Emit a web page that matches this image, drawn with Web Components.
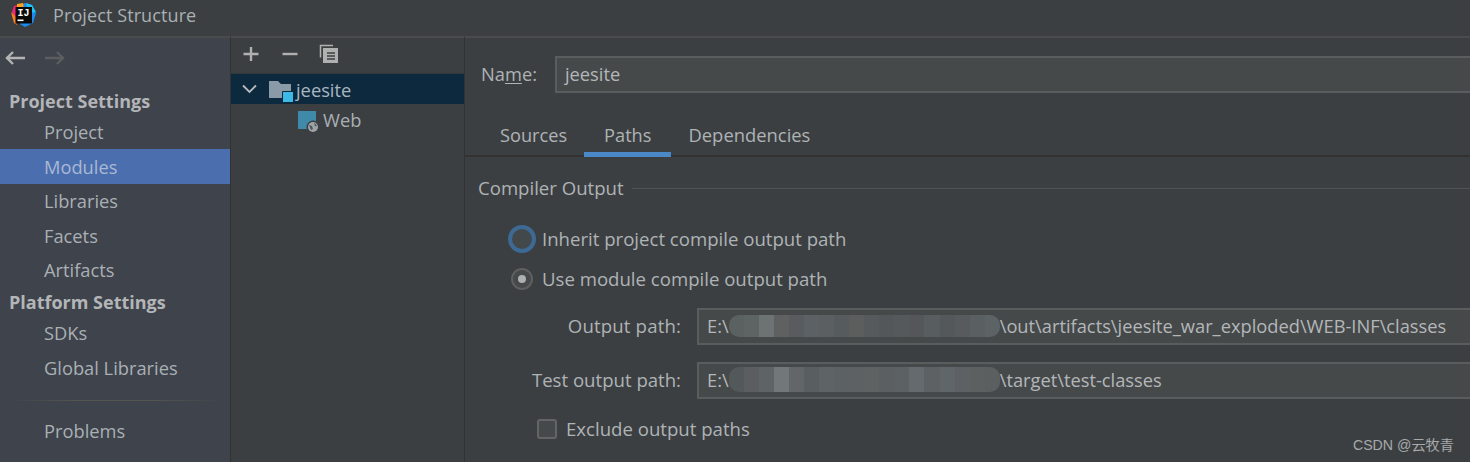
<!DOCTYPE html>
<html><head><meta charset="utf-8">
<style>
html,body{margin:0;padding:0;background:#3c3f41;overflow:hidden}
body{width:1470px;height:462px;font-family:"Open Sans","Noto Sans",sans-serif;color:#bbbbbb;font-size:18px}
ps-app{display:block;width:1470px;height:462px}
</style></head><body>
<ps-app></ps-app>
<template id="t-app">
<style>
:host{display:flex;flex-direction:column;position:relative;overflow:hidden}
.main{display:flex;flex:1;min-height:0}
</style>
<ps-title></ps-title>
<div class="main"><ps-side></ps-side><ps-tree></ps-tree><ps-form></ps-form></div>
<ps-mark></ps-mark>
</template>
<template id="t-title">
<style>
:host{display:flex;align-items:center;height:36px;box-sizing:border-box;background:#3c3f41;flex:none;padding:0 0 6px 11px;gap:17px}
.t{font-size:18px;color:#a9b0b5;line-height:30px;letter-spacing:.1px}
svg{display:block;flex:none}
</style>
<svg width="25" height="25" viewBox="0 0 25 25"><path d="M3 3 11 1l3 4-4 12-6 0-3-8z" fill="#f5296f"/><path d="M0 9 5 14 6 22 3 20z" fill="#fc801d"/><path d="M6 1l6-1 2 4H6z" fill="#fca01d"/><path d="M13 0l8 2 4 8-3 10-8 4-5-3z" fill="#1a8bf5"/><path d="M15 0l6 2 4 7-7 1z" fill="#1ec5f0"/><rect x="4.500" y="4" width="16.500" height="16.500" fill="#0a0a0a"/><text x="6.500" y="13" font-family="Liberation Mono,monospace" font-weight="700" font-size="10" fill="#fff" textLength="12">IJ</text><rect x="6.500" y="16.500" width="6" height="1.600" fill="#fff"/></svg>
<span class="t">Project Structure</span>
</template>
<template id="t-side">
<style>
:host{display:block;width:230px;flex:none;background:#3e434c;border-top:2px solid #4a4b4c;box-sizing:content-box;height:424px}
.nav{display:flex;gap:20px;height:40px;align-items:center;padding:0 0 0 5px;box-sizing:border-box}
.nav svg{display:block}
.h{font-weight:700;font-size:18px;line-height:30px;padding-left:9px;color:#b3b5b7}
.h.first{margin-top:8px}
.i{height:34.5px;line-height:34.5px;padding-left:44px;font-size:18.300px;color:#aab0b4}
.i.sel{background:#4b6eaf;color:#a8b9d4}
.d{height:1px;margin:14px 5px 14.500px;background:linear-gradient(90deg,#3e434c,#53544f 30%,#53544f 70%,#3e434c)}
</style>
<div class="nav">
<svg width="20" height="18" viewBox="0 0 20 18"><path d="M1 9h19M8 3 2 9l6 6" fill="none" stroke="#b4b4b4" stroke-width="2.400"/></svg>
<svg width="20" height="18" viewBox="0 0 20 18"><path d="M0 9h19M12 3l6 6-6 6" fill="none" stroke="#5b5d5e" stroke-width="2.400"/></svg>
</div>
<div class="h first">Project Settings</div>
<div class="i" style="height:33px;line-height:32px">Project</div>
<div class="i sel" style="line-height:36px">Modules</div>
<div class="i">Libraries</div>
<div class="i" style="line-height:36px">Facets</div>
<div class="i">Artifacts</div>
<div class="h">Platform Settings</div>
<div class="i" style="height:34px;line-height:32px">SDKs</div>
<div class="i">Global Libraries</div>
<div class="d"></div>
<div class="i" style="height:34px;line-height:32px">Problems</div>
</template>
<template id="t-tree">
<style>
:host{display:block;width:235px;flex:none;box-sizing:border-box;background:#3c3f41;border-left:1px solid #323232;border-right:1px solid #323232;border-top:2px solid #4a4b4c;height:426px}
.tb{height:35px;box-sizing:content-box;display:flex;align-items:flex-start;padding-left:11px;gap:21px;border-bottom:1px solid #343637}
.tb svg{display:block;margin-top:8px}
.tb svg:last-child{margin:6px 0 0 -1px}
.r{height:30px;display:flex;align-items:center;font-size:18.300px}
.r span{padding-top:1px}
.r1{background:#0d293e;color:#a9b6c0;padding-left:11px}
.r2{padding-left:67px;color:#a9b0b5}
.r svg{display:block;flex:none}
</style>
<div class="tb">
<svg width="18" height="16" viewBox="0 0 18 16"><path d="M1.500 8h15M9 1v14" stroke="#b0b0b0" stroke-width="2.400" fill="none"/></svg>
<svg width="18" height="16" viewBox="0 0 18 16"><path d="M1.500 8h15" stroke="#b0b0b0" stroke-width="2.400" fill="none"/></svg>
<svg width="20" height="20" viewBox="0 0 20 20"><path d="M1.500 13.500V1.500H14" fill="none" stroke="#b0b0b0" stroke-width="1.500"/><rect x="4" y="4" width="15" height="15" fill="#b0b0b0"/><path d="M8 9h8M8 12h8M8 15h8" stroke="#3c3f41" stroke-width="1.300"/></svg>
</div>
<div class="r r1"><svg width="15" height="10" viewBox="0 0 15 10" style="margin-right:12px"><path d="M1 1.500 7.500 8 14 1.500" fill="none" stroke="#b8bcbf" stroke-width="1.800"/></svg>
<svg width="24" height="21" viewBox="0 0 24 21" style="margin:5px 3px 0 0"><path d="M0 0h9l3 3h10v14H0z" fill="#8a9aa6"/><rect x="14" y="11" width="10" height="10" fill="#3db9e6"/><path d="M13.500 21V10.500H24" fill="none" stroke="#0d293e"/></svg><span>jeesite</span></div>
<div class="r r2"><svg width="21" height="22" viewBox="0 0 21 22" style="margin:5px 4px 0 0"><rect x="0" y="0" width="18" height="18" fill="#3f8aa8"/><circle cx="15" cy="16" r="6.500" fill="#3c3f41"/><circle cx="15" cy="16" r="5" fill="#9ea4a8"/><path d="M11 14l3 1 1 3-2 1zM16 11.500l3 3-2 1z" fill="#4f5558"/></svg><span>Web</span></div>
</template>
<template id="t-form">
<style>
:host{display:block;flex:1;min-width:0;border-top:2px solid #4a4b4c;box-sizing:border-box;height:426px;background:#3c3f41;overflow:hidden;font-size:18.600px}
.name{display:flex;align-items:center;height:37px;margin-top:18px;padding-left:16px;gap:18px}
.name u{text-underline-offset:2px}
.name .lab,.name .inp{font-size:18.300px}
.lab{color:#aeb3b6;padding-bottom:2px}
.inp{flex:1;height:37px;box-sizing:border-box;border:2px solid #5a5d5e;border-right:0;background:#45494a;line-height:33px;padding:0 0 2px 8px;font-size:18.300px;color:#b4b7b9;white-space:nowrap;overflow:hidden;display:flex;align-items:center}
.tabs{display:flex;height:40px;margin-top:22px;padding-left:19px;border-bottom:2px solid #323232}
.tab{padding:0 16px;line-height:40px;height:42px;box-sizing:border-box;font-size:18.200px;color:#aeb3b6;flex:none}
.tab.on{border-bottom:5px solid #4a88c7}
.sec{display:flex;align-items:center;gap:8px;margin-top:16px;padding-left:13px;height:30px;color:#aeb3b6}
.sec span{padding-bottom:2px}
.sec::after{content:"";flex:1;height:1px;background:#515354}
.radio{display:flex;align-items:center;height:40px;color:#aeb3b6;padding-left:43px;gap:6px}
.radio span:last-child{padding-bottom:2px}
.dot{width:28px;height:28px;box-sizing:border-box;border-radius:50%;flex:none;display:flex;align-items:center;justify-content:center}
.dot.foc{border:4px solid #3d6a94;background:#43484b}
.dot.sel{border:2px solid #5e6060;background:#45494a;width:22px;height:22px;margin:3px}
.dot.sel::after{content:"";width:8px;height:8px;border-radius:50%;background:#adb1b3}
.rows{margin-top:9px}
.f{display:flex;align-items:center;height:37px;margin-bottom:17px}
.f .lab{width:216px;text-align:right;flex:none;margin-right:16px}
.ck{display:flex;align-items:center;gap:9px;padding-left:72px;color:#aeb3b6;height:26px}
.ck span{padding-bottom:2px}
.ck i{display:block;width:20px;height:20px;box-sizing:border-box;border:2px solid #626465;border-radius:3px;background:#45494a}
ps-blur{flex:none}
</style>
<div class="name"><span class="lab">Na<u>m</u>e:</span><div class="inp">jeesite</div></div>
<div class="tabs"><div class="tab" style="padding-right:17px">Sources</div><div class="tab on" style="padding:0 20px">Paths</div><div class="tab" style="padding-left:17px;font-size:18.400px">Dependencies</div></div>
<div class="sec"><span>Compiler Output</span></div>
<div class="radio" style="margin-top:16px"><span class="dot foc"></span><span>Inherit project compile output path</span></div>
<div class="radio"><span class="dot sel"></span><span>Use module compile output path</span></div>
<div class="rows">
<div class="f"><span class="lab" style="letter-spacing:.15px">Output path:</span><div class="inp">E:\<ps-blur style="width:271px" data-c="5b6061 5e6363 6d7273 5f6161 585c5e 5b6164 5c5f61 565b5e 5c5e5d 565a5c 53575a 55595b 555657 585d60 55585b 575b5e 5a5f62 5d6265"></ps-blur>\out\artifacts\jeesite_war_exploded\WEB-INF\classes</div></div>
<div class="f"><span class="lab">Test output path:</span><div class="inp">E:\<ps-blur style="width:271px;height:25px" data-c="53585a 5a5e60 5e6365 72787a 636669 595e61 5e6365 5c6163 5e6164 5f6263 5b5f60 5c6264 646a6d 5e6163 5f6568 5d6163 5d6061 5c5f60"></ps-blur>\target\test-classes</div></div>
</div>
<div class="ck"><i></i><span>Exclude output paths</span></div>
</template>
<template id="t-blur">
<style>
:host{display:flex;width:272px;height:22px;border-radius:10px;overflow:hidden}
b{display:block;flex:1}
</style>
</template>
<template id="t-mark">
<style>
:host{position:absolute;right:16px;bottom:7px;font-family:"Liberation Sans","Noto Sans CJK SC",sans-serif;font-size:14.200px;color:#a7a9aa;line-height:20px}
</style>
<span>CSDN @云牧青</span>
</template>
<script>
function def(tag,tid){customElements.define(tag,class extends HTMLElement{
constructor(){super();const s=this.attachShadow({mode:'open'});s.appendChild(document.getElementById(tid).content.cloneNode(true));}
connectedCallback(){if(this.dataset.c&&this.shadowRoot.querySelectorAll('b').length===0){for(const c of this.dataset.c.split(' ')){const b=document.createElement('b');b.style.background='#'+c;this.shadowRoot.appendChild(b);}}}
});}
def('ps-blur','t-blur');def('ps-mark','t-mark');def('ps-form','t-form');def('ps-tree','t-tree');def('ps-side','t-side');def('ps-title','t-title');def('ps-app','t-app');
</script>
</body></html>
